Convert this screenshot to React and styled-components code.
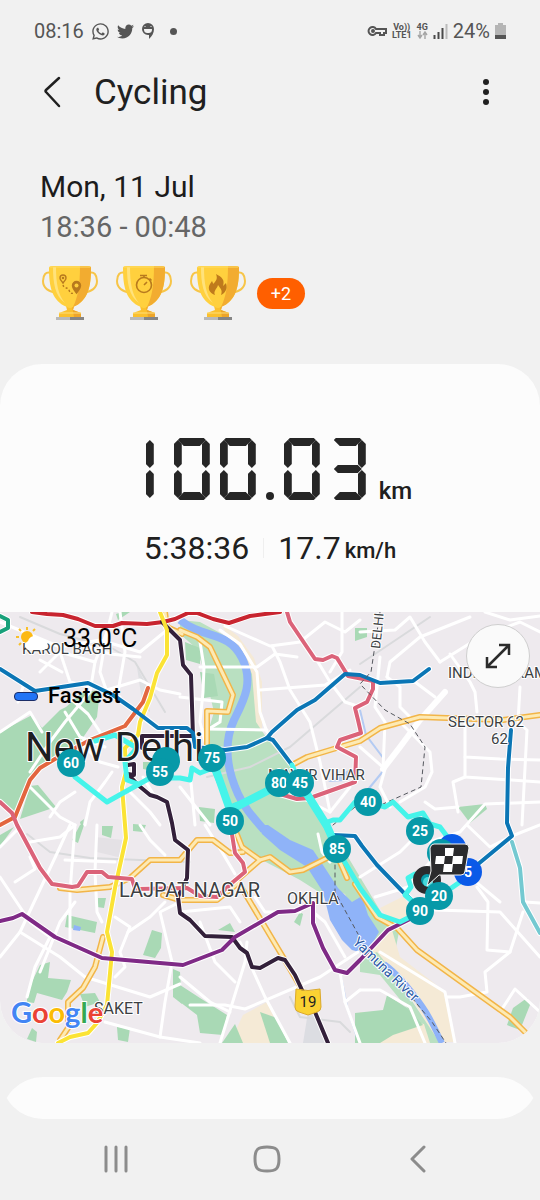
import React from 'react';
import styled, { createGlobalStyle } from 'styled-components';
import { FaWhatsapp, FaTwitter } from 'react-icons/fa';

const GlobalStyle = createGlobalStyle`
  * {
    box-sizing: border-box;
  }

  body {
    margin: 0;
    background: #f1f1f1;
    color: #202020;
    font-family: Roboto, 'Liberation Sans', sans-serif;
  }

  button {
    margin: 0;
    padding: 0;
    border: 0;
    background: none;
    color: inherit;
    font: inherit;
    cursor: pointer;
  }

  svg {
    display: block;
  }
`;

const Page = styled.div`
  display: flex;
  flex-direction: column;
  min-height: 100vh;
`;

const StatusBar = styled.div`
  display: flex;
  justify-content: space-between;
  padding: 19px 34px 0 34px;
  color: #555;
  font-size: 20px;
  line-height: 24px;
`;

const StatusGroup = styled.div`
  display: flex;
  align-items: center;
  gap: ${({ $gap }) => $gap}px;
`;

const Dot = styled.span`
  width: 7px;
  height: 7px;
  margin-left: 8px;
  border-radius: 50%;
  background: #555;
`;

const NetLabel = styled.span`
  display: flex;
  flex-direction: column;
  align-items: center;
  font-size: 9px;
  font-weight: 700;
  line-height: 8px;
`;

const Header = styled.header`
  display: flex;
  align-items: center;
  padding: 24px 40px 0 38px;
  height: 74px;
`;

const IconButton = styled.button`
  display: flex;
  align-items: center;
  justify-content: center;
  width: 28px;
  height: 40px;
`;

const Title = styled.h1`
  flex: 1;
  margin: 2px 0 0 28px;
  font-size: 35px;
  font-weight: 400;
  line-height: 48px;
`;

const Summary = styled.section`
  padding: 49px 40px 0;
  line-height: 41px;
`;

const DateLine = styled.div`
  color: #1c1c1c;
  font-size: 30px;
`;

const TimeLine = styled.div`
  color: #666;
  font-size: 29px;
`;

const Awards = styled.div`
  display: flex;
  align-items: center;
  gap: 18px;
  margin: 18px 0 0 2px;
`;

const MoreAwards = styled.button`
  height: 31px;
  width: 48px;
  margin-left: -7px;
  border-radius: 16px;
  background: #ff5f00;
  color: #fff;
  font-size: 18px;
  line-height: 31px;
`;

const Card = styled.main`
  margin-top: 44px;
  overflow: hidden;
  border-radius: 42px;
  background: #fcfcfc;
`;

const Distance = styled.div`
  display: flex;
  justify-content: center;
  align-items: flex-end;
  gap: 10px;
  padding-top: 74px;
`;

const HiddenText = styled.span`
  position: absolute;
  font-size: 1px;
  opacity: 0;
`;

/* one LCD digit: three columns, verticals and bars overlap in the corner cells */
const DigitBox = styled.span`
  display: grid;
  grid-template-columns: 8px 20px 8px;
  grid-template-rows: 2px 29px 29px 2px;
  height: 62px;
  padding-left: ${({ $narrow }) => ($narrow ? 18 : 0)}px;
  width: 36px;
`;

const Upright = styled.i`
  grid-column: ${({ $col }) => $col};
  grid-row: ${({ $row }) => $row};
  margin: ${({ $row }) => ($row === 2 ? '0 0 1px' : '1px 0 0')};
  background: #262626;
  clip-path: polygon(
    50% 0,
    100% 4px,
    100% calc(100% - 4px),
    50% 100%,
    0 calc(100% - 4px),
    0 4px
  );
`;

const bars = {
  a: ['1 / 3', 'polygon(0 2px, 2px 0, calc(100% - 2px) 0, 100% 2px, calc(100% - 6px) 100%, 6px 100%)', 'start'],
  d: ['3 / 5', 'polygon(6px 0, calc(100% - 6px) 0, 100% 6px, calc(100% - 2px) 100%, 2px 100%, 0 6px)', 'end'],
  g: ['2 / 4', 'polygon(0 50%, 4px 0, calc(100% - 4px) 0, 100% 50%, calc(100% - 4px) 100%, 4px 100%)', 'center'],
};

const Bar = styled.i`
  grid-column: 1 / 4;
  grid-row: ${({ $kind }) => bars[$kind][0]};
  align-self: ${({ $kind }) => bars[$kind][2]};
  height: 8px;
  margin: 0 4px;
  background: #262626;
  clip-path: ${({ $kind }) => bars[$kind][1]};
`;

const Point = styled.i`
  width: 8px;
  height: 8px;
  border-radius: 50%;
  background: #262626;
`;

const DistanceUnit = styled.span`
  margin-left: 3px;
  font-size: 24px;
  font-weight: 500;
  line-height: 18px;
`;

const Stats = styled.div`
  display: flex;
  justify-content: center;
  align-items: center;
  padding: 28px 0 44px;
  font-size: 32px;
  line-height: 40px;
`;

const Divider = styled.i`
  width: 1px;
  height: 20px;
  margin: 0 14px;
  background: #efefef;
`;

const SpeedUnit = styled.span`
  margin: 6px 0 0 4px;
  font-size: 22px;
  font-weight: 500;
  line-height: 34px;
`;

const MapBox = styled.section`
  position: relative;

  > svg {
    width: 100%;
    height: auto;
  }
`;

const MapOverlay = styled.div`
  position: absolute;
  top: 11px;
  left: 14px;
  display: flex;
  flex-direction: column;
  gap: 26px;
  color: #000;
`;

const Weather = styled.div`
  display: flex;
  align-items: center;
  gap: 13px;
  font-size: 25px;
  line-height: 32px;
`;

const Legend = styled.div`
  display: flex;
  align-items: center;
  gap: 10px;
  font-size: 22px;
  font-weight: 500;
  line-height: 30px;
`;

const LegendSwatch = styled.i`
  width: 24px;
  height: 9px;
  border: 1px solid #1b2c66;
  border-radius: 4px;
  background: #2274f5;
`;

const ExpandButton = styled.button`
  position: absolute;
  top: 12px;
  right: 10px;
  display: flex;
  align-items: center;
  justify-content: center;
  width: 64px;
  height: 64px;
  border: 1px solid #cfcfcf;
  border-radius: 50%;
  background: #fafafa;
`;

/* the next card is so short that its rounded halves meet in a point */
const NextCard = styled.div`
  display: grid;
  grid-template-rows: 21px 21px;
  margin-top: 34px;
`;

const Half = styled.div`
  display: flex;
  overflow: hidden;
  align-items: ${({ $bottom }) => ($bottom ? 'flex-end' : 'flex-start')};

  &::before {
    content: '';
    flex: 1;
    height: 84px;
    margin: 0 1px;
    flex-shrink: 0;
    border-radius: 42px;
    background: #fcfcfc;
  }
`;

const NavBar = styled.nav`
  display: grid;
  grid-template-columns: repeat(3, 1fr);
  justify-items: center;
  padding: 20px 47px 20px 40px;
`;

const SEGMENTS = {
  0: 'abcdef',
  1: 'ef',
  3: 'abcdg',
};

const UPRIGHTS = { f: [1, 2], e: [1, 3], b: [3, 2], c: [3, 3] };

const Digit = ({ value }) => (
  <DigitBox $narrow={value === '1'}>
    {SEGMENTS[value].split('').map(s =>
      UPRIGHTS[s] ? (
        <Upright key={s} $col={UPRIGHTS[s][0]} $row={UPRIGHTS[s][1]} />
      ) : (
        <Bar key={s} $kind={s} />
      ),
    )}
  </DigitBox>
);

const LcdNumber = ({ value }) => (
  <>
    <HiddenText>{value}</HiddenText>
    {value.split('').map((c, i) => (c === '.' ? <Point key={i} /> : <Digit key={i} value={c} />))}
  </>
);

const Trophy = ({ label, children }) => (
  <svg width="56" height="54" viewBox="0 0 56 54" role="img" aria-label={label}>
    <g fill="none" strokeWidth="2">
      <path d="M9 7C4 5 1 9 1 15c0 7 6 11 12 11" stroke="#f7c548" />
      <path d="M47 7c5-2 8 2 8 8 0 7-6 11-12 11" stroke="#f7c548" />
    </g>
    <path d="M24 40h8l-1 4 8 3v4H17v-4l8-3z" fill="#fbc02e" />
    <path d="M30 40h2l-1 4 8 3v4h-7z" fill="#eda52a" />
    <path d="M17 47h22" stroke="#ffe07a" strokeWidth="1" />
    <path d="M7 2q0-2 3-2h36q3 0 3 2c0 19-3 33-18 39q-3 2-6 0C10 35 7 21 7 2z" fill="#ffd03e" />
    <path d="M38 0h8q3 0 3 2c0 19-3 33-18 39 5-10 7-22 7-41z" fill="#f2ac30" />
    <path d="M11 1h3c0 16 2 28 9 36C13 30 11 17 11 1z" fill="#ffe27c" />
    <path d="M8 1h40" stroke="#ffdc64" strokeWidth="1" />
    <rect x="14" y="51" width="14" height="3" fill="#b9b9b9" />
    <rect x="28" y="51" width="14" height="3" fill="#858585" />
    {children}
  </svg>
);

const RouteMark = () => (
  <g fill="none" stroke="#b87a1e" strokeWidth="1.4">
    <path d="M21 17c-2-3-3-3-3-5a3 3 0 0 1 6 0c0 2-1 2-3 5z" />
    <circle cx="21" cy="12" r=".6" />
    <path d="M34.500 27c-3-4-4-5-4-7.500a4 4 0 0 1 8 0c0 2.500-1 3.500-4 7.500z" fill="#b87a1e" />
    <circle cx="34.500" cy="19.500" r="2" fill="#ffd03e" stroke="none" />
    <path d="M21 19c1 4 5 2 6 5s2 4 5 3" strokeDasharray="2 2" />
  </g>
);

const StopwatchMark = () => (
  <g fill="none" stroke="#b87a1e" strokeWidth="1.600">
    <circle cx="28" cy="19" r="7.500" />
    <path d="M24 9.500h7M28 10v2M28 19l3-3M33.500 12.500l2 2" />
  </g>
);

const FlameMark = () => (
  <path
    d="M26 8c6 3 9 6 7 12l3-3c2 6-1 10-5 12 2-5-1-7-3-10-1 4-5 6-3 10-5-2-8-6-5-11l2-3c1 2 1 2 1 3 3-3 5-5 3-10z"
    fill="#bf7a1c"
  />
);

// map geometry, in the map's own 540 x 431 space
const WASH = '#b9e0c1';
const PARK = '#a9d9b5';
const SAND = '#f5ead6';
const WATER = '#8fb3f8';

const areas = [
  [SAND, '222,12 238,24 254,46 262,70 262,120 300,165 250,160 240,60'],
  [WASH, '180,8 200,10 222,22 242,40 252,62 256,110 268,128 300,165 325,206 345,240 366,275 384,305 400,315 394,345 370,345 340,306 322,282 300,268 262,248 240,232 213,160 205,130 214,100 204,58 196,36 180,22'],
  [PARK, '185,30 200,36 200,52 186,48'],
  [PARK, '200,60 214,62 218,84 204,86'],
  [PARK, '199,195 215,197 214,211 200,209'],
  [SAND, '332,276 345,282 365,325 375,332 392,318 400,345 443,378 455,430 438,430 393,355 374,342 350,330 336,310'],
  [SAND, '380,296 404,284 412,304 394,313'],
  [PARK, '0,120 32,103 42,116 60,98 66,95 83,80 100,78 97,105 80,130 50,150 30,166 15,203 0,190'],
  [PARK, '20,207 30,174 38,173 56,195'],
  [PARK, '27,380 40,353 50,350 48,366 71,368 67,380 62,388 37,381 34,391 27,390'],
  [PARK, '67,303 97,310 95,321 65,315'],
  [WATER, '74,313 81,315 80,319 73,318'],
  [PARK, '98,286 106,286 104,296 97,295'],
  [PARK, '152,318 162,321 161,336 155,346 143,343'],
  [PARK, '72,228 80,213 84,213 78,231'],
  [PARK, '102,214 113,214 111,226 102,223'],
  [PARK, '133,212 146,213 143,220 133,219'],
  [PARK, '0,223 14,215 0,234'],
  [PARK, '117,415 130,416 128,430 118,428'],
  [PARK, '27,427 32,416 37,420 36,430'],
  [PARK, '173,357 180,360 182,392 173,385'],
  [PARK, '80,382 95,381 100,390 85,395'],
  [PARK, '180,373 200,386 227,403 223,423 200,421 197,403 180,390'],
  [PARK, '143,150 158,150 158,160 143,157'],
  [PARK, '80,210 84,207 82,218'],
  [SAND, '235,420 243,403 267,390 273,403 277,431 230,431'],
  [PARK, '222,431 235,412 243,431'],
  [PARK, '260,400 277,406 288,431 270,431'],
  [PARK, '218,318 230,311 235,320'],
  [PARK, '294,310 300,300 303,302 300,314'],
  [WASH, '360,346 377,340 393,360 410,386 440,431 423,431 407,396 380,363 360,360'],
  [SAND, '360,400 424,412 430,431 360,431'],
  [PARK, '355,401 383,398 387,383 407,396 423,413 393,423 380,431 355,431'],
  [PARK, '507,413 513,396 527,386 530,393 520,418'],
  [PARK, '458,195 485,192 487,197 470,211'],
  [PARK, '355,16 367,16 367,25 355,29'],
  [PARK, '116,2 122,0 130,0 118,8'],
  ['#e4e1e5', '95,225 123,228 122,246 97,240'],
  ['#dfe0e3', '137,55 148,76 150,100 143,96'],
  ['#dcdde2', '308,400 318,402 325,431 303,431'],
];

const river = '258,213 268,213 290,228 313,238 323,253 338,276 352,290 362,284 368,303 379,320 366,342 352,338 342,328 330,308 323,280 307,255 280,238 262,222';

const roads = [
  '0,10 60,35 100,28 140,40 167,18', '40,60 60,40 95,50 107,20 112,0', '60,40 70,70 90,75',
  '75,30 110,42 140,45', '95,50 90,80 65,110 50,130 30,160', '65,100 80,125 105,135',
  '107,20 100,60 107,80 120,85', '40,48 62,60', '0,120 30,100 42,120', '100,80 140,68 160,78 180,82',
  '120,0 125,40 118,80', '30,175 60,205 75,213', '50,205 60,190 75,180', '85,213 90,190 105,170 112,160',
  '130,180 150,200 160,213', '143,165 155,185', '18,90 24,72', '72,88 88,102 100,120', '80,130 100,150 118,155',
  '200,30 204,55 203,80 200,110 205,130', '200,55 257,55 275,42 297,45', '220,18 240,32 257,60 260,100 267,120',
  '225,14 270,34 300,30 325,10 345,20 360,8', '272,34 280,50 290,78 310,110 320,150 330,200',
  '260,78 325,73 350,58', '342,0 342,40 330,60', '315,45 330,70 345,90 360,95', '205,117 267,118',
  '180,85 222,90 220,110 207,118', '190,160 195,213', '180,175 210,213', '300,185 330,200 350,175',
  '360,20 395,18 410,5 425,30 440,50', '380,45 375,95 385,110 383,157', '387,65 390,50 420,25 470,5',
  '387,65 400,75 400,95 410,105', '415,70 435,85', '440,50 480,25 520,10 540,20', '450,42 470,70 475,80 477,100',
  '465,110 465,145 500,147 540,148', '520,75 518,110 527,118 522,213', '465,145 465,165 540,170',
  '465,165 453,170 458,200', '400,110 430,140 432,160 425,175 400,190', '360,135 385,157 380,175 390,195',
  '458,195 435,197 425,190', '540,190 485,192 460,220 430,230', '485,0 510,8 540,4',
  '0,265 30,310 50,325', '0,345 20,320 60,235 70,213', '20,320 60,345 85,365', '15,270 35,257 30,245',
  '75,213 60,225 30,230', '70,330 70,280 75,213', '40,360 60,310 75,290', '65,248 115,250',
  '0,235 20,215', '27,385 35,355 50,325', '85,365 150,385 180,372', '97,213 95,260 97,300 102,310',
  '140,213 150,228 165,243', '115,305 130,315 120,340 125,355 115,365', '105,410 160,425 200,431',
  '128,320 150,305 165,290', '160,425 165,390 172,350 160,300 180,290', '205,213 222,240 235,262',
  '180,300 230,295 240,310', '247,330 245,350 220,431', '240,330 265,385 290,431',
  '190,393 225,393 245,397 320,365 358,340', '200,310 215,350 235,370', '180,365 210,390 230,400',
  '255,285 265,300 300,300', '313,300 325,310 345,345', '340,360 345,390 360,378', '345,390 360,431',
  '360,265 400,240 415,225', '375,285 408,275 430,250', '467,213 490,235 512,224 540,213',
  '435,298 500,300 540,345', '477,275 488,290 487,338 510,340 523,300', '525,290 540,291',
  '510,340 485,360 487,380 460,385 447,385', '380,340 445,380 455,431', '360,378 380,378 410,395 425,431',
  '500,400 515,377 540,400', '440,240 500,290', '318,222 322,240 330,250',
];

const rails = ['20,5 60,22 110,35 135,50 150,75 165,100', '207,165 250,155 290,135 360,75', '360,52 430,5', '27,222 50,240 90,246 190,250', '290,385 300,405 340,410 350,420'];

const highways = [
  '180,18 197,25 210,35 233,83 228,100 207,99 207,133',
  '292,153 307,145 340,135 360,129 380,116 420,105 447,106 503,108 540,103',
  '60,276 77,278 110,275 130,266 150,248 180,248 197,228 213,228 230,241 243,240',
  '236,220 242,235 260,248 270,245 290,260 303,258 327,246 337,243 347,266',
  '260,248 237,268 283,345 300,374',
  '163,283 180,288 217,288 237,272',
  '103,325 95,355 83,376 68,390 68,416 60,428',
  '355,272 377,305 397,316 417,338 510,405 525,420',
  '165,0 167,15 182,22',
];

// [colour, points]
const metro = [
  ['#c8242f', '32,0 47,2 63,3 78,7 95,14 113,14 122,11 147,12 163,10 175,7 188,1 197,1 213,7 229,11 250,4 280,0'],
  ['#18a07a', '0,4 8,8 8,16 0,20'],
  ['#33203a', '162,10 180,28 183,53 191,63 193,124 142,124 142,136'],
  ['#33203a', '128,153 134,152 134,163 128,162 138,173 150,183 157,185 167,190 172,211 175,228 188,238 187,266 178,285 180,301 190,308 205,324 232,325 240,336 247,341 252,355 260,356 278,346 285,348 295,363 302,378 315,400 328,431'],
  ['#fbe335', '160,0 167,18 167,43 157,61 150,86 140,110 138,123 125,136 126,160 122,175 125,213 126,226 115,276 107,320 112,340 107,393 97,411 88,421 70,425 58,431'],
  ['#e3663f', '148,76 143,90 125,114 90,128 55,147 40,156 30,168 15,205 0,213'],
  ['#db6379', '0,190 12,201 17,213 40,256 52,272 72,275 78,274 87,260 102,260 108,265 132,267 135,277 187,276 200,284 217,285 233,270 245,260 243,251 235,241 230,210'],
  ['#db6379', '287,0 290,10 315,47 323,48 332,44 337,46 348,64 373,69 373,77 367,90 355,96 358,108 361,121 340,128 337,135 356,145 355,170 310,186 297,187 280,182'],
  ['#0b76b5', '0,57 35,79 88,71 113,83 133,97 158,116 187,116 193,121 195,135 225,138 247,135 267,126 272,120 297,98 315,88 345,62 360,63 380,71 413,69 429,57'],
  ['#0b76b5', '267,126 273,128 292,153'],
  ['#0b76b5', '511,118 508,156 507,211 512,224 477,253'],
  ['#0b76b5', '333,223 355,224 362,234 377,253 403,280 417,293'],
  ['#74c9d1', '512,230 520,256 523,290 540,321'],
  ['#7f2a86', '0,309 13,306 22,302 55,325 102,346 183,353 222,338 235,325 278,300 295,299 313,291 313,311 323,336 335,358 347,361 360,348 388,318 412,306'],
];

const route = [
  '95,129 115,123 137,136 125,150 127,168 138,172',
  '75,165 107,190 150,166 180,166 190,168 192,156 200,161 213,156 230,195 270,179 300,171',
  '292,153 300,171 325,213 337,237 360,276 380,303 400,310 412,304',
  '325,211 333,208 340,208 355,190 368,190 385,195 393,190 408,205 423,201 430,212 440,215 452,231',
  '415,262 408,266 411,275 405,283 420,296',
  '440,284 460,270 468,260',
];

// stretches ridden out and back
const doubled = ['216,158 230,198 279,173', '300,171 327,214 337,237'];

const dashes = ['380,0 371,60 360,72 385,98 410,112 425,135 421,175 383,192', '335,245 335,280 358,322', '412,386 432,410 446,431', '333,213 355,195'];

const places = [
  [22, 42, 15, 'KAROL BAGH'],
  [25, 149, 40, 'New Delhi'],
  [268, 168, 15, 'MAYUR VIHAR'],
  [448, 66, 15, 'INDIRAPURAM'],
  [448, 115, 15, 'SECTOR 62'],
  [491, 132, 15, '62'],
  [119, 285, 20, 'LAJPAT NAGAR'],
  [287, 292, 16, 'OKHLA'],
  [94, 402, 16, 'SAKET'],
];

const TEAL = '#0799a8';
const BLUE = '#0a5ae8';

const pins = [
  [71, 151, '60', TEAL], [166, 149, '', TEAL], [160, 160, '55', TEAL], [212, 146, '75', TEAL],
  [230, 209, '50', TEAL], [279, 171, '80', TEAL], [300, 171, '45', TEAL], [368, 190, '40', TEAL],
  [452, 236, '', BLUE], [441, 241, '', TEAL], [420, 219, '25', TEAL], [337, 237, '85', TEAL],
  [468, 260, '5', BLUE],
];

const lastPins = [[439, 284, '20', TEAL], [420, 299, '90', TEAL]];

const google = [['G', '#4285f4'], ['o', '#ea4335'], ['o', '#fbbc05'], ['g', '#4285f4'], ['l', '#34a853'], ['e', '#ea4335']];

const MapLine = styled.polyline`
  fill: none;
  stroke: ${({ $color }) => $color};
  stroke-width: ${({ $width }) => $width};
  stroke-linejoin: round;
  stroke-linecap: round;
`;

const PlaceName = styled.text`
  fill: ${({ $color }) => $color || '#3c3f43'};
  stroke: #fff;
  stroke-width: 2px;
  stroke-linejoin: round;
  paint-order: stroke;
  font-family: Roboto, 'Liberation Sans', sans-serif;
`;

const PinText = styled.text`
  fill: #fff;
  font: 700 14px Roboto, sans-serif;
  text-anchor: middle;
`;

const Pin = ({ x, y, label, color }) => (
  <g>
    <circle cx={x} cy={y} r="14" fill={color} />
    {label && <PinText x={x} y={y + 5}>{label}</PinText>}
  </g>
);

const RouteMap = () => (
  <svg viewBox="0 0 540 431" role="img" aria-label="Route map">
    <rect width="540" height="431" fill="#eeeaee" />
    {areas.map(([fill, points]) => <polygon key={points} points={points} fill={fill} />)}
    {rails.map(p => <MapLine key={p} points={p} $color="#d9dadc" $width={2} />)}
    <path d="M180 8C205 28 228 18 242 46c12 24 2 42-8 62-12 26-5 54 4 74 6 13 14 22 26 36" fill="none" stroke={WATER} strokeWidth="8" />
    <polygon points={river} fill={WATER} />
    <path d="M384 352c14 10 26 25 38 42 10 14 14 26 20 37" fill="none" stroke={WATER} strokeWidth="6" />
    <path d="M360 98l6 25 18 24M383 157l40-50M366 180l18-22M341 365l6 30 10 30" fill="none" stroke="#b4cbf3" strokeWidth="2" />
    <path d="M328 170l22-13-5 12z" fill="#b4cbf3" />
    {roads.map(p => <MapLine key={p} points={p} $color="#fff" $width={3} />)}
    <MapLine points="445,80 420,108 400,135 383,157" $color="#fff" $width={6} />
    {highways.map(p => <MapLine key={p} points={p} $color="#f2b548" $width={6} />)}
    {highways.map(p => <MapLine key={p} points={p} $color="#fdeab4" $width={3} />)}
    {metro.map(([, p]) => <MapLine key={p} points={p} $color="#fff" $width={6} />)}
    {metro.map(([color, p]) => <MapLine key={p} points={p} $color={color} $width={4} />)}
    {dashes.map(p => <MapLine key={p} points={p} $color="#55585e" $width={1} strokeDasharray="4 4" />)}

    {route.map(p => <MapLine key={p} points={p} $color="#45f4ea" $width={5} />)}
    {doubled.map(p => <MapLine key={p} points={p} $color="#45f4ea" $width={8} />)}

    {places.map(([x, y, size, name]) => (
      <PlaceName key={name} x={x} y={y} fontSize={size} $color={size === 40 ? '#1d2023' : undefined}>{name}</PlaceName>
    ))}
    <PlaceName x="380" y="37" fontSize="13" transform="rotate(-84 380 37)">DELHI</PlaceName>
    <PlaceName x="352" y="331" fontSize="14" $color="#2c5ba8" transform="rotate(44 352 331)">Yamuna River</PlaceName>

    <path d="M296 377q12 3 24 0l1 18q0 4-4 5l-9 3-9-3q-4-1-4-5z" fill="#fbd232" stroke="#dba92b" strokeWidth="1" />
    <text x="308" y="395" textAnchor="middle" fontFamily="Roboto" fontSize="15" fill="#222">19</text>

    {pins.map(([x, y, label, color]) => <Pin key={`${x}-${y}`} x={x} y={y} label={label} color={color} />)}
    <circle cx="427" cy="268" r="10" fill={TEAL} stroke="#2b2b2d" strokeWidth="8" />
    <circle cx="428" cy="270" r="5" fill="#45d8da" />
    <path d="M430 236q1-4 4-4h31q4 0 4 4l-4 23q0 4-4 4h-22l-12 11 4-15z" fill="#2b2b2d" stroke="#f4f4f4" strokeWidth="1" strokeLinejoin="round" />
    <path d="M445 236h9l-1 8h10l-1 8h-9l-1 8h-9l1-8h-9l1-8h9z" fill="#fff" />
    <path d="M445 244h8l-1 8h-8z" fill="#2b2b2d" />
    {lastPins.map(([x, y, label, color]) => <Pin key={label} x={x} y={y} label={label} color={color} />)}

    <text x="11" y="411" fontFamily="Lato, sans-serif" fontSize="29" fontWeight="700" stroke="#fff" strokeWidth="2" paintOrder="stroke">
      {google.map(([c, fill], i) => <tspan key={i} fill={fill}>{c}</tspan>)}
    </text>
  </svg>
);

const App = () => (
  <Page>
    <GlobalStyle />
    <StatusBar>
      <StatusGroup $gap={7}>
        <span>08:16</span>
        <FaWhatsapp size={19} />
        <FaTwitter size={17} />
        <svg width="14" height="18" viewBox="0 0 14 18">
          <path d="M7 1a6 6 0 0 1 6 6c0 4-2 7-5 10v-4H7A6 6 0 0 1 7 1z" fill="#555" />
          <path d="M3 7h8c0 3-1 4-4 4S3 10 3 7z" fill="#f1f1f1" />
          <path d="M4 4v1M10 4v1" stroke="#f1f1f1" />
        </svg>
        <Dot />
      </StatusGroup>
      <StatusGroup $gap={5}>
        <svg width="20" height="12" viewBox="0 0 20 12" fill="none" stroke="#555" strokeWidth="2">
          <path d="M9 4h10v4h-2v2h-4V8H9a4 4 0 1 1 0-4z" />
          <circle cx="6" cy="6" r="1" />
        </svg>
        <NetLabel>
          <span>Vo))</span>
          <span>LTE1</span>
        </NetLabel>
        <NetLabel>
          <span>4G</span>
          <svg width="11" height="8" viewBox="0 0 11 8" fill="none" stroke="#a5a5a5" strokeWidth="1.400">
            <path d="M3 0v6M1 4l2 3 2-3M8 8V2M6 4l2-3 2 3" />
          </svg>
        </NetLabel>
        <svg width="15" height="16" viewBox="0 0 15 16">
          <path d="M1.500 16v-4M5.500 16V9M9.500 16V5" stroke="#4a4a4a" strokeWidth="2" />
          <path d="M13.500 16V1" stroke="#bbb" strokeWidth="2" />
        </svg>
        <span>24%</span>
        <svg width="11" height="16" viewBox="0 0 11 16">
          <path d="M3 0h5v2h3v14H0V2h3z" fill="#b5b5b5" />
          <path d="M0 12h11v4H0z" fill="#555" />
        </svg>
      </StatusGroup>
    </StatusBar>

    <Header>
      <IconButton aria-label="Back">
        <svg width="18" height="32" viewBox="0 0 18 32" fill="none" stroke="#202020" strokeWidth="2.500" strokeLinecap="round" strokeLinejoin="round">
          <path d="M16 2L3 14q-1 1 0 2l13 14" />
        </svg>
      </IconButton>
      <Title>Cycling</Title>
      <IconButton aria-label="More options">
        <svg width="8" height="28" viewBox="0 0 8 28" fill="#202020">
          <circle cx="4" cy="4" r="3" />
          <circle cx="4" cy="14" r="3" />
          <circle cx="4" cy="24" r="3" />
        </svg>
      </IconButton>
    </Header>

    <Summary>
      <DateLine>Mon, 11 Jul</DateLine>
      <TimeLine>18:36 - 00:48</TimeLine>
      <Awards>
        <Trophy label="Longest distance"><RouteMark /></Trophy>
        <Trophy label="Longest duration"><StopwatchMark /></Trophy>
        <Trophy label="Most calories"><FlameMark /></Trophy>
        <MoreAwards>+2</MoreAwards>
      </Awards>
    </Summary>

    <Card>
      <Distance>
        <LcdNumber value="100.03" />
        <DistanceUnit>km</DistanceUnit>
      </Distance>
      <Stats>
        <span>5:38:36</span>
        <Divider />
        <span>17.7</span>
        <SpeedUnit>km/h</SpeedUnit>
      </Stats>
      <MapBox>
        <RouteMap />
        <MapOverlay>
          <Weather>
            <svg width="36" height="26" viewBox="0 0 36 26">
              <path d="M13 1v3M13 18v3M2 11h3M5 3l2 2M21 3l-2 2M5 19l2-2" stroke="#f8c02b" strokeWidth="2" />
              <circle cx="13" cy="11" r="6" fill="#fcb913" />
              <path d="M14 24a5 5 0 0 1 0-9 7 7 0 0 1 13-1 5 5 0 0 1 3 10z" fill="#fff" />
            </svg>
            <span>33.0°C</span>
          </Weather>
          <Legend>
            <LegendSwatch />
            <span>Fastest</span>
          </Legend>
        </MapOverlay>
        <ExpandButton aria-label="Expand map">
          <svg width="26" height="26" viewBox="0 0 26 26" fill="none" stroke="#2b2b2b" strokeWidth="2.500">
            <path d="M2 24L24 2M14 2h10v10M2 14v10h10" />
          </svg>
        </ExpandButton>
      </MapBox>
    </Card>

    <NextCard>
      <Half />
      <Half $bottom />
    </NextCard>

    <NavBar>
      <IconButton aria-label="Recent apps">
        <svg width="24" height="28" viewBox="0 0 24 28" stroke="#8c8c8c" strokeWidth="3" strokeLinecap="round">
          <path d="M2 2v24M12 2v24M22 2v24" />
        </svg>
      </IconButton>
      <IconButton aria-label="Home">
        <svg width="28" height="28" viewBox="0 0 28 28" fill="none" stroke="#8c8c8c" strokeWidth="3">
          <path d="M14 2c9 0 12 2 12 12s-3 12-12 12S2 24 2 14 5 2 14 2z" />
        </svg>
      </IconButton>
      <IconButton aria-label="Navigate back">
        <svg width="16" height="28" viewBox="0 0 16 28" fill="none" stroke="#8c8c8c" strokeWidth="3" strokeLinecap="round" strokeLinejoin="round">
          <path d="M14 2L2 14l12 12" />
        </svg>
      </IconButton>
    </NavBar>
  </Page>
);

export default App;
